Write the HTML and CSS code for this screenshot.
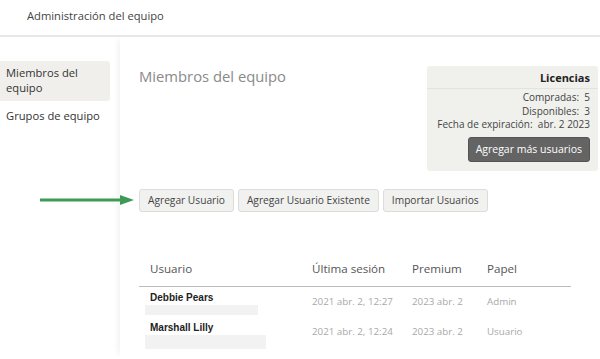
FILE: index.html
```html
<!DOCTYPE html>
<html lang="es">
<head>
  <meta charset="UTF-8">
  <title>Administración del equipo</title>
  <link rel="stylesheet" href="styles.css">
</head>
<body>
  <header class="topbar">Administración del equipo</header>
  <div class="layout">
    <nav class="sidebar">
      <a class="nav-item active" href="#">Miembros del equipo</a>
      <a class="nav-item" href="#">Grupos de equipo</a>
    </nav>
    <main class="content">
      <div class="content-top">
        <h1>Miembros del equipo</h1>
        <aside class="licenses">
          <h2>Licencias</h2>
          <div class="license-info">
            <div>Compradas:&nbsp; 5</div>
            <div>Disponibles:&nbsp; 3</div>
            <div>Fecha de expiración:&nbsp; abr. 2 2023</div>
          </div>
          <button class="btn-dark">Agregar más usuarios</button>
        </aside>
      </div>

      <div class="actions">
        <svg class="arrow" width="94" height="10" viewBox="0 0 94 10">
          <line x1="0" y1="5" x2="82" y2="5" stroke="#3e9b55" stroke-width="3"/>
          <polygon points="80,0 94,5 80,10" fill="#3e9b55"/>
        </svg>
        <button class="btn">Agregar Usuario</button>
        <button class="btn">Agregar Usuario Existente</button>
        <button class="btn">Importar Usuarios</button>
      </div>

      <table class="members">
        <thead>
          <tr>
            <th class="col-user">Usuario</th>
            <th class="col-login">Última sesión</th>
            <th class="col-premium">Premium</th>
            <th>Papel</th>
          </tr>
        </thead>
        <tbody>
          <tr>
            <td><div class="name">Debbie Pears</div><div class="email" style="width:113px"></div></td>
            <td>2021 abr. 2, 12:27</td>
            <td>2023 abr. 2</td>
            <td>Admin</td>
          </tr>
          <tr>
            <td><div class="name">Marshall Lilly</div><div class="email tall" style="width:121px"></div></td>
            <td>2021 abr. 2, 12:24</td>
            <td>2023 abr. 2</td>
            <td>Usuario</td>
          </tr>
        </tbody>
      </table>
    </main>
  </div>
</body>
</html>
```

FILE: styles.css
```css
body {
  margin: 0;
  background: #fff;
  font-family: 'Open Sans', 'Noto Sans', Arial, sans-serif;
  color: #444;
  overflow: hidden;
}
.topbar {
  height: 37px;
  box-sizing: border-box;
  padding: 8px 0 0 27px;
  font-size: 11.2px;
  line-height: 15px;
  color: #444;
  border-bottom: 2px solid #e8e8e8;
}
.layout {
  display: flex;
  min-height: 320px;
}
.sidebar {
  width: 120px;
  padding-top: 24px;
  box-sizing: border-box;
  display: flex;
  flex-direction: column;
}
.nav-item {
  display: block;
  width: 110px;
  box-sizing: border-box;
  padding: 3px 6px;
  font-size: 11.2px;
  line-height: 15px;
  color: #333;
  text-decoration: none;
}
.nav-item.active {
  background: #f0efec;
  border-radius: 0 3px 3px 0;
  padding-top: 4px;
  padding-bottom: 6px;
  margin-bottom: 4px;
}
.content {
  flex: 1;
  padding: 0 2px 0 19px;
  box-shadow: -5px 0 6px -3px rgba(0, 0, 0, 0.06);
}
.content-top {
  display: flex;
  justify-content: space-between;
  align-items: flex-start;
  padding-top: 29px;
}
.content-top h1 {
  margin: 0;
  font-size: 14.8px;
  line-height: 20px;
  font-weight: normal;
  color: #8a8a8a;
}
.licenses {
  width: 171px;
  box-sizing: border-box;
  background: #f0f0ed;
  border-radius: 3px;
  padding: 4px 8px 9px 2px;
  text-align: right;
  font-size: 10px;
  white-space: nowrap;
  color: #444;
}
.licenses h2 {
  margin: 0 -8px 0 -2px;
  padding: 0 8px 3px;
  font-size: 11px;
  line-height: 15px;
  border-bottom: 1px solid #e2e2de;
  color: #222;
}
.license-info {
  padding-top: 2px;
  line-height: 13.5px;
}
.btn-dark {
  margin-top: 5px;
  background: #646464;
  color: #fff;
  border: 1px solid #555;
  border-radius: 3px;
  padding: 4px 7px 5px;
  font-family: inherit;
  font-size: 10.5px;
  line-height: 14px;
}
.actions {
  position: relative;
  display: flex;
  gap: 4px;
  margin-top: 18px;
}
.arrow {
  position: absolute;
  left: -99px;
  top: 6px;
}
.btn {
  background: #f1f1ef;
  border: 1px solid #dcdcd8;
  border-radius: 3px;
  padding: 4px 8px;
  font-family: inherit;
  font-size: 10.2px;
  line-height: 13px;
  color: #444;
}
.members {
  margin-top: 49px;
  width: 432px;
  border-collapse: collapse;
}
.col-user { width: 162px; }
.col-login { width: 100px; }
.col-premium { width: 75px; }
.members th {
  text-align: left;
  font-weight: normal;
  font-size: 11.6px;
  line-height: 16px;
  color: #555;
  padding: 0 0 9px 0;
  border-bottom: 1px solid #bbb;
}
.members th:first-child,
.members td:first-child {
  padding-left: 11px;
}
.members td {
  font-size: 9.75px;
  line-height: 13px;
  color: #a8a8a8;
  padding: 5px 0 2px 0;
  vertical-align: top;
}
.members td:not(:first-child) {
  padding-top: 8px;
}
.name {
  font-family: 'Liberation Sans', Arial, sans-serif;
  font-weight: bold;
  font-size: 10px;
  line-height: 12px;
  color: #222;
}
.email {
  height: 10px;
  margin: 1px 0 0 -5px;
  background: #f2f2f2;
}
.email.tall {
  height: 14px;
}
```
